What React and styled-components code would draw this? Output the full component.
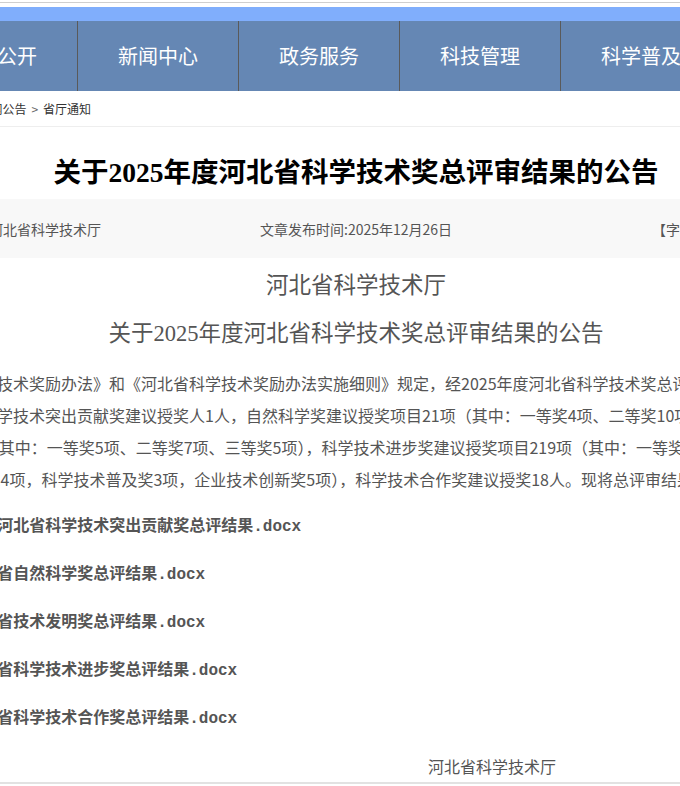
import React from 'react';
import styled, { createGlobalStyle } from 'styled-components';

const GlobalStyle = createGlobalStyle`
  html, body {
    margin: 0;
    padding: 0;
    background: #fff;
    overflow: hidden;
  }
  body {
    font-family: "Noto Sans CJK SC", sans-serif;
  }
`;

const Viewport = styled.div`
  width: 100%;
  overflow: hidden;
`;

// the page is wider than the window, scrolled a bit to the right
const Page = styled.div`
  width: 1200px;
  margin-left: -244px;
`;

const TopLine = styled.div`
  margin-top: 2px;
  height: 4px;
  border-top: 1px solid #cfcfcf;
`;

const BlueBar = styled.div`
  height: 14px;
  background: #80aefc;
`;

const Nav = styled.nav`
  display: flex;
  height: 70px;
  background: #6587b4;
`;

const NavItem = styled.a`
  flex: 0 0 161px;
  box-sizing: border-box;
  border-right: 1px solid #5a5a5a;
  color: #fff;
  font-size: 20px;
  line-height: 70px;
  text-align: center;
  text-decoration: none;
`;

const Crumbs = styled.div`
  height: 35px;
  line-height: 35px;
  padding-left: 57px;
  border-bottom: 1px solid #eee;
  font-size: 12px;
  color: #333;
  white-space: nowrap;
`;

const Sep = styled.span`
  margin: 0 5px;
  color: #666;
`;

const Title = styled.h1`
  margin: 0;
  padding: 27px 0 7px;
  font-family: "Liberation Serif", "Noto Sans CJK SC", serif;
  font-size: 27.5px;
  line-height: 38px;
  font-weight: 700;
  color: #000;
  text-align: center;
  white-space: nowrap;
`;

const MetaBar = styled.div`
  display: flex;
  align-items: center;
  height: 59px;
  padding-left: 191px;
  background: #f8f8f8;
  font-size: 14px;
  color: #555;
  white-space: nowrap;
`;

const MetaCell = styled.span`
  flex: 0 0 ${p => p.w}px;
`;

const Content = styled.div`
  padding: 0 87px;
  border-bottom: 2px solid #e2e2e2;
`;

const Heading = styled.div`
  margin-top: ${p => p.top || 0}px;
  font-family: "Liberation Serif", "Noto Sans CJK SC", serif;
  font-size: 22.5px;
  line-height: 48px;
  color: #555;
  text-align: center;
`;

const Para = styled.p`
  margin: 9px 0 0 -6px;
  font-size: 16px;
  line-height: 32px;
  color: #555;
  text-indent: 2em;
  white-space: nowrap;
`;

const AttachList = styled.div`
  margin-top: 8px;
  padding-left: 103px;
`;

const Attach = styled.a`
  display: block;
  font-family: "Liberation Mono", "Noto Sans CJK SC", monospace;
  font-size: 16px;
  font-weight: 700;
  line-height: 48px;
  color: #555;
  text-decoration: none;
  white-space: nowrap;
`;

const Sign = styled.div`
  padding: 7px 0 0 585px;
  font-size: 16px;
  line-height: 32px;
  color: #555;
`;

const navs = ['首页', '信息公开', '新闻中心', '政务服务', '科技管理', '科学普及', '互动交流'];

const attachments = [
  '附件1.河北省科学技术突出贡献奖总评结果.docx',
  '2.河北省自然科学奖总评结果.docx',
  '3.河北省技术发明奖总评结果.docx',
  '4.河北省科学技术进步奖总评结果.docx',
  '5.河北省科学技术合作奖总评结果.docx',
];

const App = () => {
  return (
    <Viewport>
      <GlobalStyle />
      <Page>
        <TopLine />
        <BlueBar />
        <Nav>
          {navs.map(n => (
            <NavItem key={n}>{n}</NavItem>
          ))}
        </Nav>
        <Crumbs>
          当前位置：首页<Sep>&gt;</Sep>新闻中心<Sep>&gt;</Sep>新闻公告<Sep>&gt;</Sep>省厅通知
        </Crumbs>
        <Title>关于2025年度河北省科学技术奖总评审结果的公告</Title>
        <MetaBar>
          <MetaCell w={313}>来源：河北省科学技术厅</MetaCell>
          <MetaCell w={392}>文章发布时间:2025年12月26日</MetaCell>
          <MetaCell w={200}>【字号：大 中 小】</MetaCell>
        </MetaBar>
        <Content>
          <Heading top={4}>河北省科学技术厅</Heading>
          <Heading>关于2025年度河北省科学技术奖总评审结果的公告</Heading>
          <Para>
            根据《河北省科学技术奖励办法》和《河北省科学技术奖励办法实施细则》规定，经2025年度河北省科学技术奖总评审委员会
            <br />
            评审，其中：河北省科学技术突出贡献奖建议授奖人1人，自然科学奖建议授奖项目21项（其中：一等奖4项、二等奖10项、三等奖7项），技术发明
            <br />
            奖建议授奖项目17项（其中：一等奖5项、二等奖7项、三等奖5项），科学技术进步奖建议授奖项目219项（其中：一等奖24项、
            <br />
            二等奖101项、三等奖14项，科学技术普及奖3项，企业技术创新奖5项），科学技术合作奖建议授奖18人。现将总评审结果予以公布。
          </Para>
          <AttachList>
            {attachments.map(a => (
              <Attach key={a}>{a}</Attach>
            ))}
          </AttachList>
          <Sign>河北省科学技术厅</Sign>
        </Content>
      </Page>
    </Viewport>
  );
};

export default App;
